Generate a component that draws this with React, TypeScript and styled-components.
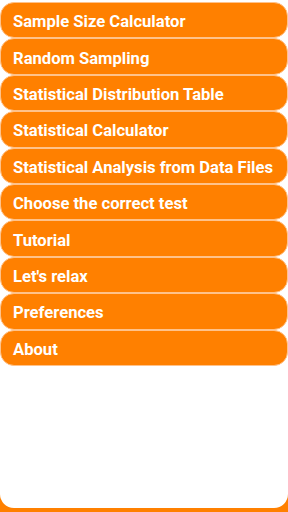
import React from 'react';
import styled, { createGlobalStyle } from 'styled-components';

const GlobalStyle = createGlobalStyle`
  html, body {
    margin: 0;
    padding: 0;
    background: #ff8000;
  }
  #root {
    height: 512px;
  }
`;

const items = [
  'Sample Size Calculator',
  'Random Sampling',
  'Statistical Distribution Table',
  'Statistical Calculator',
  'Statistical Analysis from Data Files',
  'Choose the correct test',
  'Tutorial',
  "Let's relax",
  'Preferences',
  'About',
];

const Panel = styled.div`
  height: 508px;
  background: #ffffff;
  border-radius: 0 0 14px 14px;
  padding-top: 2px;
  box-sizing: border-box;
  display: flex;
  flex-direction: column;
`;

const MenuButton = styled.button`
  display: flex;
  align-items: center;
  height: 36.4px;
  width: 100%;
  margin: 0;
  padding: 3px 0 0 12px;
  box-sizing: border-box;
  background: #ff8000;
  border: 1px solid #ffc28a;
  border-radius: 14px;
  color: #ffffff;
  font-family: Roboto, "Liberation Sans", sans-serif;
  font-weight: 700;
  font-size: 16.6px;
  text-align: left;
  white-space: nowrap;
  cursor: pointer;
`;

export default function App() {
  return (
    <>
      <GlobalStyle />
      <Panel>
        {items.map((label) => (
          <MenuButton key={label}>{label}</MenuButton>
        ))}
      </Panel>
    </>
  );
}
